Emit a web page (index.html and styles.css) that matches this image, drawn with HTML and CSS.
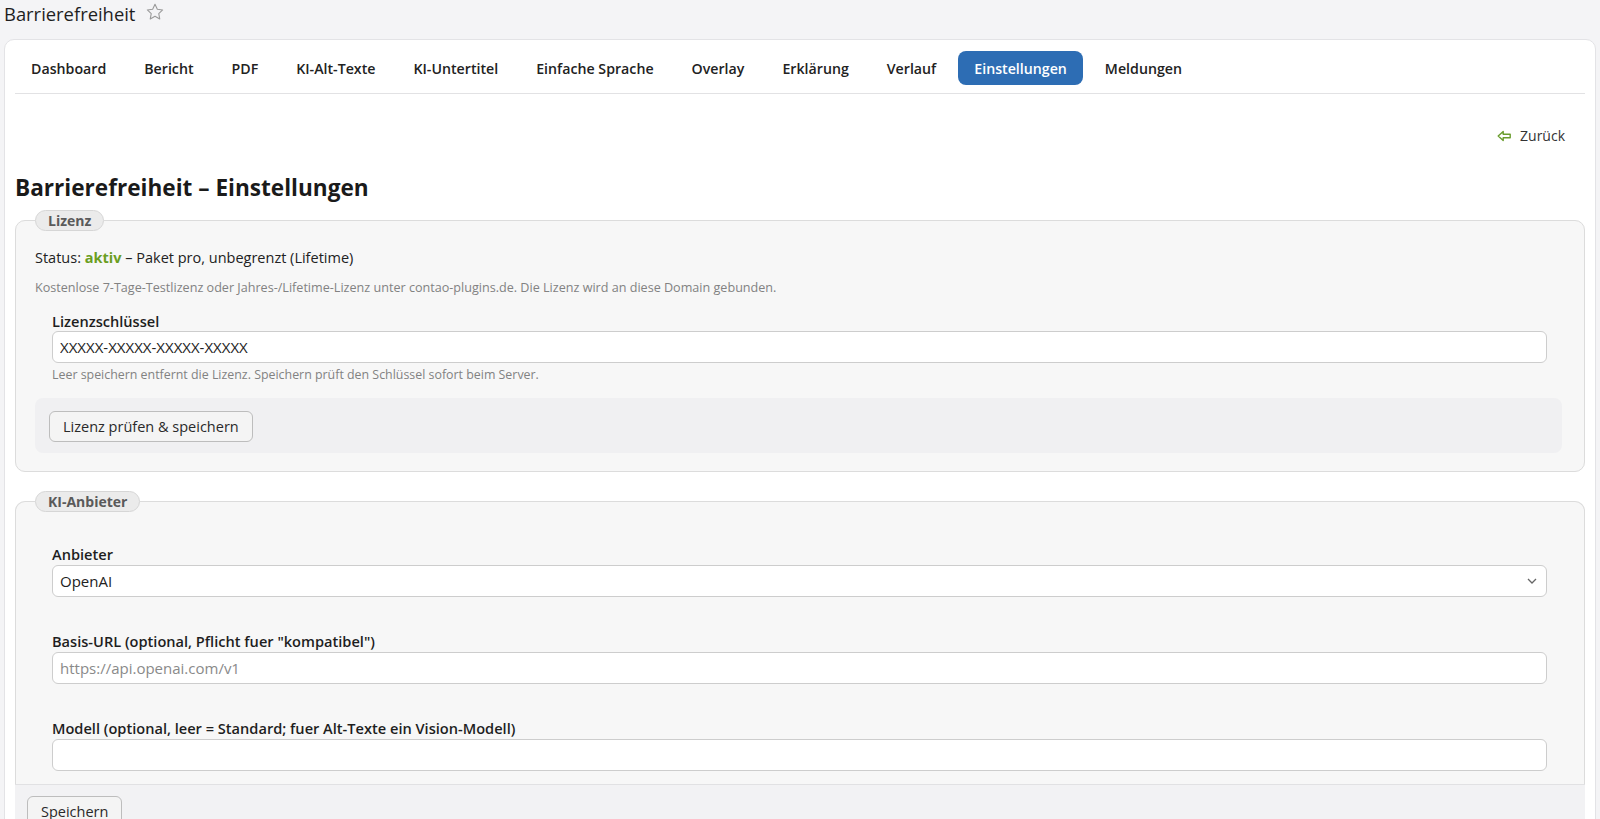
FILE: index.html
```html
<!DOCTYPE html>
<html lang="de">
<head>
    <meta charset="utf-8">
    <title>Barrierefreiheit – Einstellungen</title>
    <link rel="stylesheet" href="styles.css">
</head>
<body>
    <div class="page-title">
        <span>Barrierefreiheit</span>
        <svg class="star" width="20" height="20" viewBox="0 0 24 24"><path d="M12 2.8l2.8 5.9 6.4.8-4.7 4.4 1.2 6.4L12 17.2l-5.7 3.1 1.2-6.4-4.7-4.4 6.4-.8z" fill="none" stroke="#9a9a9a" stroke-width="1.3" stroke-linejoin="round"/></svg>
    </div>

    <div class="card">
        <nav class="tabs">
            <a class="tab">Dashboard</a>
            <a class="tab">Bericht</a>
            <a class="tab">PDF</a>
            <a class="tab">KI-Alt-Texte</a>
            <a class="tab">KI-Untertitel</a>
            <a class="tab">Einfache Sprache</a>
            <a class="tab">Overlay</a>
            <a class="tab">Erklärung</a>
            <a class="tab">Verlauf</a>
            <a class="tab active">Einstellungen</a>
            <a class="tab">Meldungen</a>
        </nav>

        <div class="back-row">
            <a class="back">
                <svg width="15" height="12" viewBox="0 0 15 12"><path d="M1.2 6L6.2 1.4v2.8h7v3.6h-7v2.8z" fill="none" stroke="#6a9d2e" stroke-width="1.4" stroke-linejoin="round"/></svg>
                Zurück
            </a>
        </div>

        <h1 class="headline">Barrierefreiheit – Einstellungen</h1>

        <form>
            <fieldset class="box">
                <legend>Lizenz</legend>
                <p class="status">Status: <strong class="ok">aktiv</strong> – Paket pro, unbegrenzt (Lifetime)</p>
                <p class="hint">Kostenlose 7-Tage-Testlizenz oder Jahres-/Lifetime-Lizenz unter contao-plugins.de. Die Lizenz wird an diese Domain gebunden.</p>
                <div class="widget first">
                    <label for="license">Lizenzschlüssel</label>
                    <input type="text" id="license" value="XXXXX-XXXXX-XXXXX-XXXXX">
                    <p class="help">Leer speichern entfernt die Lizenz. Speichern prüft den Schlüssel sofort beim Server.</p>
                </div>
                <div class="submit-area">
                    <button type="button" class="btn">Lizenz prüfen &amp; speichern</button>
                </div>
            </fieldset>

            <fieldset class="box open">
                <legend>KI-Anbieter</legend>
                <div class="widget">
                    <label for="provider">Anbieter</label>
                    <div class="select-wrap">
                        <select id="provider">
                            <option>OpenAI</option>
                        </select>
                        <svg class="chevron" width="10" height="6" viewBox="0 0 10 6"><path d="M1 1l4 4 4-4" fill="none" stroke="#666" stroke-width="1.3"/></svg>
                    </div>
                </div>
                <div class="widget">
                    <label for="baseurl">Basis-URL (optional, Pflicht fuer "kompatibel")</label>
                    <input type="text" id="baseurl" placeholder="https://api.openai.com/v1">
                </div>
                <div class="widget">
                    <label for="model">Modell (optional, leer = Standard; fuer Alt-Texte ein Vision-Modell)</label>
                    <input type="text" id="model">
                </div>
            </fieldset>

            <div class="form-footer">
                <button type="button" class="btn">Speichern</button>
            </div>
        </form>
    </div>
</body>
</html>
```

FILE: styles.css
```css
html {
    overflow: hidden;
}
body {
    margin: 0;
    padding: 0 4px;
    background: #f4f4f6;
    font-family: "Open Sans", "Noto Sans", sans-serif;
    font-size: 14.5px;
    color: #222;
}
.page-title {
    display: flex;
    align-items: center;
    gap: 10px;
    height: 27px;
    margin-bottom: 12px;
    font-size: 18.4px;
    color: #1e1e1e;
}
.star {
    margin-top: -3px;
}
.card {
    background: #fff;
    border: 1px solid #e3e3e6;
    border-radius: 10px;
    padding: 11px 10px 0 10px;
    min-height: 900px;
}
.tabs {
    display: flex;
    gap: 6px;
    padding-bottom: 8px;
    border-bottom: 1px solid #e2e2e4;
}
.tab {
    display: flex;
    align-items: center;
    height: 34px;
    padding: 0 16px;
    border-radius: 8px;
    font-weight: 600;
    font-size: 14.2px;
    color: #222;
    cursor: pointer;
}
.tab.active {
    background: #2d6db4;
    color: #fff;
}
.back-row {
    display: flex;
    justify-content: flex-end;
    margin-top: 32px;
    padding-right: 20px;
    line-height: 20px;
}
.back {
    display: flex;
    align-items: center;
    gap: 8px;
    font-size: 14px;
    color: #333;
}
.headline {
    margin: 27px 0 7px 0;
    font-size: 22.6px;
    line-height: 30px;
    font-weight: 700;
    color: #1a1a1a;
}
.box {
    margin: 0 0 19px 0;
    padding: 0 22px 18px 19px;
    background: #f7f7f7;
    border: 1px solid #dcdcdc;
    border-radius: 10px;
}
.box legend {
    margin: 0;
    padding: 0 12px;
    height: 21px;
    line-height: 20px;
    box-sizing: border-box;
    background: #ebebeb;
    border: 1px solid #d6d6d6;
    border-radius: 11px;
    font-weight: 700;
    font-size: 14px;
    color: #5a5a5a;
}
.status {
    margin: 16px 0 0 0;
    line-height: 22px;
}
.ok {
    color: #6b9e1f;
}
.hint {
    margin: 10px 0 0 0;
    line-height: 18px;
    font-size: 12.6px;
    color: #828282;
}
.widget {
    padding: 0 15px 0 17px;
    margin-top: 34px;
}
.widget.first {
    margin-top: 14px;
}
.box.open .widget:first-of-type {
    margin-top: 32px;
}
.widget label {
    display: block;
    margin-bottom: 1px;
    line-height: 20px;
    font-weight: 600;
    font-size: 14.6px;
    color: #1e1e1e;
}
.widget.first label {
    margin-bottom: 0;
}
.widget input,
.widget select {
    display: block;
    width: 100%;
    height: 32px;
    box-sizing: border-box;
    padding: 0 7px;
    background: #fff;
    border: 1px solid #cdcdcd;
    border-radius: 6px;
    font-family: inherit;
    font-size: 15px;
    color: #222;
    appearance: none;
}
.widget input::placeholder {
    color: #8a8a8a;
}
.select-wrap {
    position: relative;
}
.chevron {
    position: absolute;
    right: 10px;
    top: 13px;
}
.help {
    margin: 4px 0 0 0;
    line-height: 16px;
    font-size: 12.4px;
    color: #828282;
}
.submit-area {
    margin-top: 15px;
    padding: 13px 14px 11px 14px;
    background: #f0f0f2;
    border-radius: 8px;
}
.btn {
    height: 31px;
    padding: 0 13px;
    background: #f4f4f4;
    border: 1px solid #bdbdbd;
    border-radius: 6px;
    font-family: inherit;
    font-size: 14.5px;
    color: #2a2a2a;
    cursor: pointer;
}
.box.open {
    margin-bottom: 0;
    padding-bottom: 13px;
    border-bottom: none;
    border-radius: 10px 10px 0 0;
}
.form-footer {
    padding: 11px 12px 40px 12px;
    background: #f2f2f4;
    border-top: 1px solid #e1e1e3;
}
```
